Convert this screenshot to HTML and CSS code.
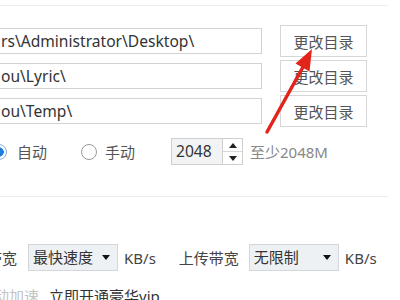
FILE: index.html
```html
<!DOCTYPE html>
<html lang="zh-CN">
<head>
  <meta charset="UTF-8" />
  <title>设置 - 下载</title>
  <link rel="stylesheet" href="styles.css">
</head>
<body>
  <div class="panel">
    <div class="rule"></div>

    <div class="dirs">
      <div class="dir-row">
        <div class="path">rs\Administrator\Desktop\</div>
        <button class="change-btn">更改目录</button>
      </div>
      <div class="dir-row">
        <div class="path">ou\Lyric\</div>
        <button class="change-btn">更改目录</button>
      </div>
      <div class="dir-row">
        <div class="path">ou\Temp\</div>
        <button class="change-btn">更改目录</button>
      </div>
    </div>

    <div class="cache-row">
      <label class="radio checked"><span class="dot"></span>自动</label>
      <label class="radio"><span class="dot"></span>手动</label>
      <div class="spin">
        <span class="spin-value">2048</span>
        <span class="spin-btns">
          <span class="up"></span>
          <span class="down"></span>
        </span>
      </div>
      <span class="hint">至少2048M</span>
    </div>

    <div class="rule rule-mid"></div>

    <div class="speed-row">
      <span class="label">下载带宽</span>
      <div class="select"><span>最快速度</span><i class="caret"></i></div>
      <span class="unit">KB/s</span>
      <span class="label up-label">上传带宽</span>
      <div class="select"><span>无限制</span><i class="caret"></i></div>
      <span class="unit">KB/s</span>
    </div>

    <div class="vip-row">
      <span class="muted">自动加速</span>
      <a class="vip-link">立即开通豪华vip</a>
    </div>
  </div>

  <svg class="pointer" width="400" height="300" viewBox="0 0 400 300">
    <line x1="267" y1="132" x2="303" y2="67" stroke="#e3241b" stroke-width="3.5" stroke-linecap="round"/>
    <polygon points="312,49 295.5,63.5 309.5,71.5" fill="#e3241b"/>
  </svg>
</body>
</html>
```

FILE: styles.css
```css
body {
  margin: 0;
  width: 400px;
  height: 300px;
  overflow: hidden;
  background: #fff;
  font-family: 'Noto Sans', 'Noto Sans CJK SC', sans-serif;
  font-size: 15px;
  color: #444;
  position: relative;
}

.panel {
  margin-left: -60px;
  width: 448px;
}

.rule {
  height: 1px;
  background: #ececec;
  margin-top: 5px;
}

.rule-mid {
  margin-top: 31px;
}

/* directory rows */
.dirs {
  margin-top: 19px;
  display: flex;
  flex-direction: column;
  gap: 3px;
}

.dir-row {
  display: flex;
  align-items: center;
  height: 32px;
}

.path {
  width: 322px;
  height: 26px;
  box-sizing: border-box;
  border: 1px solid #d2d2d2;
  padding-left: 60px;
  line-height: 24px;
  font-size: 15.6px;
  color: #333;
  white-space: nowrap;
  overflow: hidden;
}

.change-btn {
  margin-left: 18px;
  width: 87px;
  height: 32px;
  background: #fff;
  border: 1px solid #d6d6d6;
  font-family: inherit;
  font-size: 15px;
  color: #555;
  padding: 0;
}

/* cache size row */
.cache-row {
  margin-top: 11px;
  height: 27px;
  display: flex;
  align-items: center;
  padding-left: 51px;
}

.radio {
  display: flex;
  align-items: center;
  gap: 10px;
  color: #555;
}

.radio + .radio {
  margin-left: 34px;
}

.radio + .radio .dot {
  margin-right: -2px;
}

.dot {
  width: 16px;
  height: 16px;
  box-sizing: border-box;
  border: 1px solid #9a9a9a;
  border-radius: 50%;
  background: #fff;
}

.radio.checked .dot {
  border-color: #7fb0e6;
  background: radial-gradient(circle, #1f7fe0 0 4.5px, #fff 5px);
}

.spin {
  margin-left: 36px;
  display: flex;
  height: 27px;
}

.spin-value {
  width: 52px;
  box-sizing: border-box;
  border: 1px solid #cfcfcf;
  background: #f2f3f5;
  padding-left: 4px;
  line-height: 25px;
  font-size: 15.6px;
  color: #333;
}

.spin-btns {
  width: 20px;
  box-sizing: border-box;
  border: 1px solid #cfcfcf;
  border-left: none;
  display: flex;
  flex-direction: column;
}

.spin-btns span {
  flex: 1;
  display: flex;
  align-items: center;
  justify-content: center;
}

.spin-btns .up {
  border-bottom: 1px solid #d8d8d8;
}

.spin-btns .up::after {
  content: '';
  border: 4px solid transparent;
  border-bottom: 5px solid #222;
  border-top: none;
}

.spin-btns .down::after {
  content: '';
  border: 4px solid transparent;
  border-top: 5px solid #222;
  border-bottom: none;
}

.hint {
  margin-left: 7px;
  color: #888;
}

/* bandwidth row */
.speed-row {
  margin-top: 47px;
  height: 27px;
  display: flex;
  align-items: center;
  padding-left: 17px;
}

.label {
  color: #444;
}

.up-label {
  margin-left: 23px;
}

.select {
  margin-left: 10px;
  width: 90px;
  height: 27px;
  box-sizing: border-box;
  border: 1px solid #d3d6da;
  background: #eef1f4;
  display: flex;
  align-items: center;
  justify-content: space-between;
  padding: 0 7px 2px 4px;
  color: #333;
}

.speed-row .select:first-of-type {
  margin-left: 11px;
}

.caret {
  border: 4px solid transparent;
  border-top: 5px solid #111;
  border-bottom: none;
  margin-top: 2px;
}

.unit {
  margin-left: 6px;
  color: #444;
}

/* vip row */
.vip-row {
  margin-top: 14px;
  display: flex;
  padding-left: 39px;
}

.muted {
  color: #c4c4c4;
}

.vip-link {
  margin-left: 10px;
  color: #333;
}

.pointer {
  position: absolute;
  left: 0;
  top: 0;
}
```
